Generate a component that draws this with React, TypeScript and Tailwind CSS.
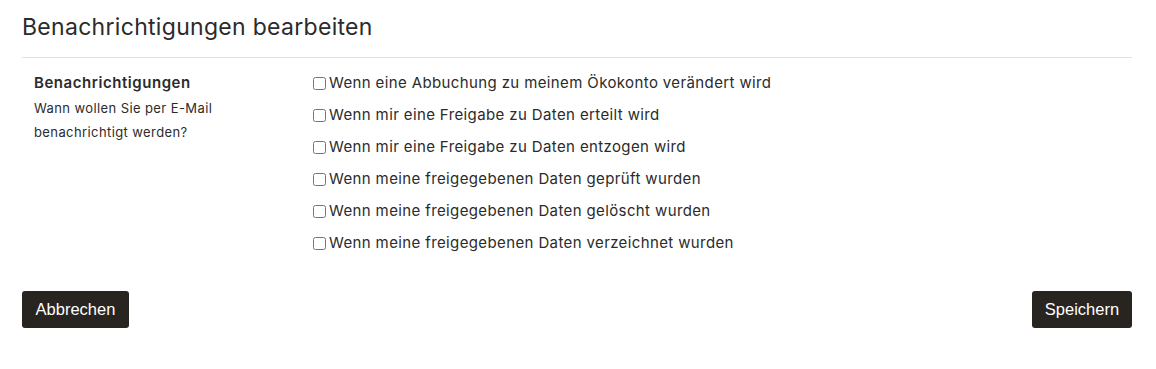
import { useState } from 'react'

const options = [
  'Wenn eine Abbuchung zu meinem Ökokonto verändert wird',
  'Wenn mir eine Freigabe zu Daten erteilt wird',
  'Wenn mir eine Freigabe zu Daten entzogen wird',
  'Wenn meine freigegebenen Daten geprüft wurden',
  'Wenn meine freigegebenen Daten gelöscht wurden',
  'Wenn meine freigegebenen Daten verzeichnet wurden',
]

export default function App() {
  const [checked, setChecked] = useState<boolean[]>(options.map(() => false))

  function toggle(i: number) {
    setChecked(checked.map((v, j) => (j === i ? !v : v)))
  }

  return (
    <div className="min-h-[369px] bg-white text-[#2b2b2b] font-['Inter',sans-serif]">
      <div className="ml-[22px] w-[1110px]">
        {/* Header */}
        <h1 className="pt-[11px] pb-[14px] text-[23px] leading-[32px] tracking-[0.3px] font-normal border-b border-[#e3e3e3]">
          Benachrichtigungen bearbeiten
        </h1>

        {/* Settings row */}
        <div className="flex pt-[14px]">
          <div className="w-[291px] pl-3">
            <div className="text-[15px] font-semibold leading-[22px] tracking-[0.55px]">Benachrichtigungen</div>
            <p className="text-[13px] leading-[24px] mt-[2px] tracking-[0.4px]">
              Wann wollen Sie per E-Mail
              <br />
              benachrichtigt werden?
            </p>
          </div>
          <div className="flex flex-col">
            {options.map((o, i) => (
              <label key={o} className="flex items-center gap-[3px] h-[32px] -mt-[5px] mb-[5px] text-[15px] tracking-[0.38px] cursor-pointer">
                <input
                  type="checkbox"
                  checked={checked[i]}
                  onChange={() => toggle(i)}
                  className="w-[13px] h-[13px] m-0"
                />
                <span>{o}</span>
              </label>
            ))}
          </div>
        </div>

        {/* Actions */}
        <div className="flex justify-between mt-[27px] font-['Liberation_Sans',Arial,sans-serif]">
          <button className="h-[37px] w-[107px] rounded-[3px] bg-[#28241f] text-white text-[16.5px]">
            Abbrechen
          </button>
          <button className="h-[37px] w-[100px] rounded-[3px] bg-[#28241f] text-white text-[16.5px]">
            Speichern
          </button>
        </div>
      </div>
    </div>
  )
}
